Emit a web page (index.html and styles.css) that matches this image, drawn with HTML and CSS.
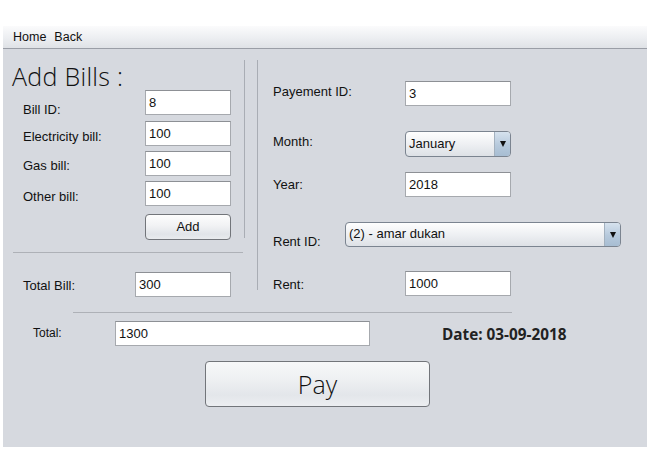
FILE: index.html
```html
<!DOCTYPE html>
<html>
<head>
<meta charset="utf-8">
<link rel="stylesheet" href="styles.css">
</head>
<body>
<div class="frame">
  <div class="menubar"><span class="menu-item">Home</span><span class="menu-item">Back</span></div>
  <div class="content">
    <div class="top">
      <div class="left">
        <div class="left-upper">
          <div class="left-form">
            <div class="title">Add Bills :</div>
            <div class="row r-bill"><span class="lbl pt12">Bill ID:</span><div class="field w86">8</div></div>
            <div class="row r-elec"><span class="lbl pt8">Electricity bill:</span><div class="field w86">100</div></div>
            <div class="row r-gas"><span class="lbl pt7">Gas bill:</span><div class="field w86">100</div></div>
            <div class="row r-other"><span class="lbl pt8">Other bill:</span><div class="field w86">100</div></div>
            <div class="row r-add"><span class="lbl"></span><div class="btn btn-add">Add</div></div>
          </div>
          <div class="vline vline-left"></div>
        </div>
        <div class="hline hline-left"></div>
        <div class="row r-total-bill"><span class="lbl lbl-tb pt6">Total Bill:</span><div class="field w96">300</div></div>
      </div>
      <div class="right">
        <div class="vline vline-right"></div>
        <div class="right-form">
          <div class="row r-pay"><span class="rlbl pt3">Payement ID:</span><div class="field w106">3</div></div>
          <div class="row r-month"><span class="rlbl pt3">Month:</span>
            <div class="combo w106"><span class="combo-text">January</span><span class="combo-arrow"><span class="tri"></span></span></div>
          </div>
          <div class="row r-year"><span class="rlbl pt5">Year:</span><div class="field w106">2018</div></div>
          <div class="row r-rentid"><span class="rlbl rlbl-short pt12">Rent ID:</span>
            <div class="combo w276"><span class="combo-text">(2) - amar dukan</span><span class="combo-arrow"><span class="tri"></span></span></div>
          </div>
          <div class="row r-rent"><span class="rlbl pt6">Rent:</span><div class="field w106">1000</div></div>
        </div>
      </div>
    </div>
    <div class="bottom">
      <div class="hline hline-bottom"></div>
      <div class="row r-total"><span class="tlbl pt5">Total:</span><div class="field w255">1300</div><span class="date">Date: 03-09-2018</span></div>
      <div class="btn btn-pay">Pay</div>
    </div>
  </div>
</div>
</body>
</html>
```

FILE: styles.css
```css
html, body {
  margin: 0;
  padding: 0;
  background: #ffffff;
  font-family: "Liberation Sans", Arial, sans-serif;
  color: #111;
}

.frame {
  margin: 26px 3px 0 3px;
  width: 644px;
}

.menubar {
  height: 22px;
  border-bottom: 1px solid #9a9ea6;
  background: linear-gradient(#fbfbfc, #eceef1 55%, #dfe2e6);
  display: flex;
  align-items: center;
  gap: 8px;
  padding-left: 10px;
  font-size: 12.5px;
}

.content {
  background: #d6d9df;
  height: 398px;
  padding-top: 11px;
  box-sizing: border-box;
}

.top {
  display: flex;
  height: 238px;
}

.left {
  width: 242px;
  display: flex;
  flex-direction: column;
}

.left-upper {
  display: flex;
  height: 179px;
}

.left-form {
  width: 241px;
  display: flex;
  flex-direction: column;
}

.title {
  height: 30px;
  padding-left: 9px;
  padding-top: 1px;
  box-sizing: border-box;
  font-family: "Open Sans", sans-serif;
  font-weight: 300;
  font-size: 25px;
  line-height: 30px;
  color: #111;
  letter-spacing: 0.3px;
}

.vline {
  width: 1px;
  background: #a9adb4;
}

.vline-left {
  height: 178px;
}

.vline-right {
  height: 230px;
}

.hline {
  height: 1px;
  background: #aeb1b7;
}

.hline-left {
  margin: 13px 0 0 10px;
  width: 230px;
}

.row {
  display: flex;
  align-items: flex-start;
  height: 25px;
}

.left-form .row {
  padding-left: 20px;
}

.r-elec { margin-top: 6px; }
.r-gas { margin-top: 5px; }
.r-other { margin-top: 5px; }
.r-add { margin-top: 8px; }

.r-total-bill {
  margin-top: 19px;
  padding-left: 20px;
}

.lbl {
  width: 122px;
  font-size: 13px;
  line-height: 15px;
}

.lbl-tb {
  width: 112px;
}

.pt3 { padding-top: 3px; }
.pt4 { padding-top: 4px; }
.pt5 { padding-top: 5px; }
.pt6 { padding-top: 6px; }
.pt7 { padding-top: 7px; }
.pt8 { padding-top: 8px; }
.pt12 { padding-top: 12px; }

.field {
  height: 25px;
  box-sizing: border-box;
  background: #ffffff;
  border: 1px solid #a6a9ae;
  border-top-color: #8d9095;
  padding: 0 3px;
  font-size: 13px;
  line-height: 23px;
  color: #111;
}

.w86 { width: 86px; }
.w96 { width: 96px; }
.w106 { width: 106px; }
.w255 { width: 255px; }
.w276 { width: 276px; }

.btn {
  box-sizing: border-box;
  border: 1px solid #72757a;
  border-radius: 4px;
  background: linear-gradient(#fdfdfd, #f1f2f4 45%, #e1e4e8 80%, #e9ebee);
  text-align: center;
  color: #111;
}

.btn-add {
  width: 86px;
  height: 26px;
  font-size: 13px;
  line-height: 24px;
}

.right {
  display: flex;
  margin-left: 12px;
}

.right-form {
  padding-left: 15px;
  padding-top: 21px;
  display: flex;
  flex-direction: column;
}

.rlbl {
  width: 132px;
  font-size: 13px;
  line-height: 15px;
}

.rlbl-short {
  width: 72px;
}

.r-month { margin-top: 25px; height: 26px; }
.r-year { margin-top: 15px; }
.r-rentid { margin-top: 25px; }
.r-rent { margin-top: 24px; }

.combo {
  height: 26px;
  box-sizing: border-box;
  display: flex;
  border: 1px solid #7b8490;
  border-radius: 4px;
  background: linear-gradient(#fefefe, #eef0f3 50%, #dde1e6);
  overflow: hidden;
}

.r-rentid .combo {
  height: 25px;
}

.combo-text {
  flex: 1;
  padding-left: 3px;
  font-size: 13px;
  line-height: 24px;
}

.r-rentid .combo-text {
  line-height: 22px;
}

.combo-arrow {
  width: 15px;
  border-left: 1px solid #a3b1bf;
  background: linear-gradient(#d6e2ee, #b6c9dc 55%, #a7bdd2);
  display: flex;
  align-items: center;
  justify-content: center;
}

.tri {
  width: 0;
  height: 0;
  border-left: 3.5px solid transparent;
  border-right: 3.5px solid transparent;
  border-top: 6px solid #111;
}

.bottom {
  display: flex;
  flex-direction: column;
}

.hline-bottom {
  margin: 14px 0 0 70px;
  width: 439px;
}

.r-total {
  margin-top: 8px;
  padding-left: 30px;
}

.tlbl {
  width: 82px;
  font-size: 12px;
  line-height: 15px;
}

.date {
  margin-left: 72px;
  padding-top: 4px;
  font-family: "Open Sans", sans-serif;
  font-weight: 700;
  font-size: 15.3px;
  line-height: 18px;
  color: #222;
}

.btn-pay {
  margin: 15px 0 0 202px;
  width: 225px;
  height: 46px;
  font-family: "Open Sans", sans-serif;
  font-weight: 300;
  font-size: 25px;
  line-height: 44px;
  background: linear-gradient(#f7f8f9, #eef0f2 40%, #e3e6ea 75%, #eceef1);
}
```
